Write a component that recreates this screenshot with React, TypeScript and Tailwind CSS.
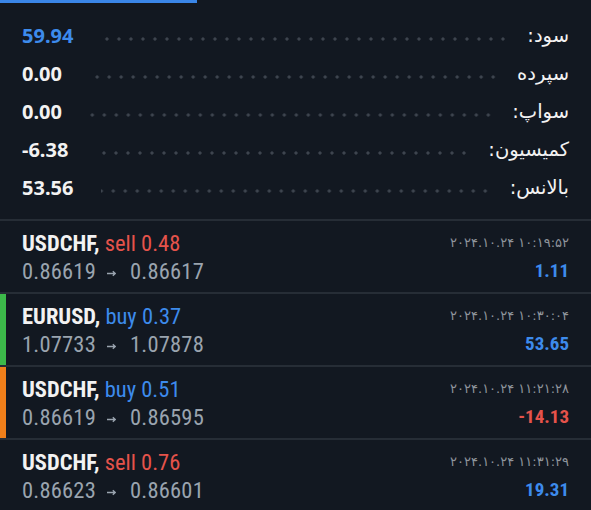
const summary = [
  { label: 'سود:', value: '59.94', blue: true },
  { label: 'سپرده', value: '0.00' },
  { label: 'سواپ:', value: '0.00' },
  { label: 'کمیسیون:', value: '-6.38' },
  { label: 'بالانس:', value: '53.56' },
];

const trades = [
  { symbol: 'USDCHF', side: 'sell', lots: '0.48', open: '0.86619', close: '0.86617', time: '۲۰۲۴.۱۰.۲۴ ۱۰:۱۹:۵۲', profit: '1.11', strip: '' },
  { symbol: 'EURUSD', side: 'buy', lots: '0.37', open: '1.07733', close: '1.07878', time: '۲۰۲۴.۱۰.۲۴ ۱۰:۳۰:۰۴', profit: '53.65', strip: 'green' },
  { symbol: 'USDCHF', side: 'buy', lots: '0.51', open: '0.86619', close: '0.86595', time: '۲۰۲۴.۱۰.۲۴ ۱۱:۲۱:۲۸', profit: '-14.13', strip: 'orange' },
  { symbol: 'USDCHF', side: 'sell', lots: '0.76', open: '0.86623', close: '0.86601', time: '۲۰۲۴.۱۰.۲۴ ۱۱:۳۱:۲۹', profit: '19.31', strip: '' },
];

export default function App() {
  return (
    <div className="w-[591px] h-[510px] overflow-hidden bg-[#121821] font-['Roboto_Condensed','Liberation_Sans_Narrow',Roboto,sans-serif]">
      <div className="h-[3px] w-[197px] bg-[#3a86e8]" />

      <div className="px-[22px] pt-[14px] pb-[12px]">
        {summary.map((row) => (
          <div key={row.label} className="flex h-[38px] items-center">
            <span
              className={`font-['Noto_Sans',sans-serif] text-[20px] font-bold ${
                row.blue ? 'text-[#3d8bec]' : 'text-[#f2f2f2]'
              }`}
            >
              {row.value}
            </span>
            <div className="ml-[28px] mr-[18px] mt-[6px] h-[4px] flex-1 bg-[radial-gradient(circle,#3e454f_1.4px,transparent_1.8px)] bg-[length:12px_4px] bg-right" />
            <span dir="rtl" className="font-['DejaVu_Sans',sans-serif] text-[19.5px] font-medium text-[#f2f2f2]">
              {row.label}
            </span>
          </div>
        ))}
      </div>

      {trades.map((t, i) => (
        <div key={i} className="flex h-[73px] border-t-2 border-[#262d36]">
          <div
            className={`w-[6px] shrink-0 ${
              t.strip === 'green' ? 'bg-[#3cb94a]' : t.strip === 'orange' ? 'bg-[#f07f1a]' : ''
            }`}
          />
          <div className="flex flex-1 justify-between pl-[16px] pr-[22px] pt-[8px]">
            <div className="flex flex-col">
              <div className="h-[28px] text-[22.5px] leading-[28px]">
                <span className="font-bold text-[#f2f2f2]">{t.symbol},</span>{' '}
                <span className={t.side === 'sell' ? 'text-[#e5534b]' : 'text-[#3d8bec]'}>
                  {t.side} {t.lots}
                </span>
              </div>
              <div className="flex h-[28px] items-center text-[22.5px] leading-[28px] tracking-[0.2px] text-[#9aa4af]">
                <span>{t.open}</span>
                <svg className="ml-[11px] mr-[14px] mt-[5px]" width="9" height="7" viewBox="0 0 9 7" fill="none">
                  <path d="M0 3.5H8M5.8 1.2L8.2 3.5L5.8 5.8" stroke="#9aa4af" strokeWidth="1.3" />
                </svg>
                <span>{t.close}</span>
              </div>
            </div>
            <div className="flex flex-col items-end">
              <div dir="ltr" className="h-[28px] font-['DejaVu_Sans',sans-serif] text-[13px] leading-[28px] text-[#8f959c]">
                {t.time}
              </div>
              <div
                className={`h-[28px] text-[19px] font-bold leading-[28px] ${
                  t.profit.startsWith('-') ? 'text-[#e5534b]' : 'text-[#3d8bec]'
                }`}
              >
                {t.profit}
              </div>
            </div>
          </div>
        </div>
      ))}
    </div>
  );
}
